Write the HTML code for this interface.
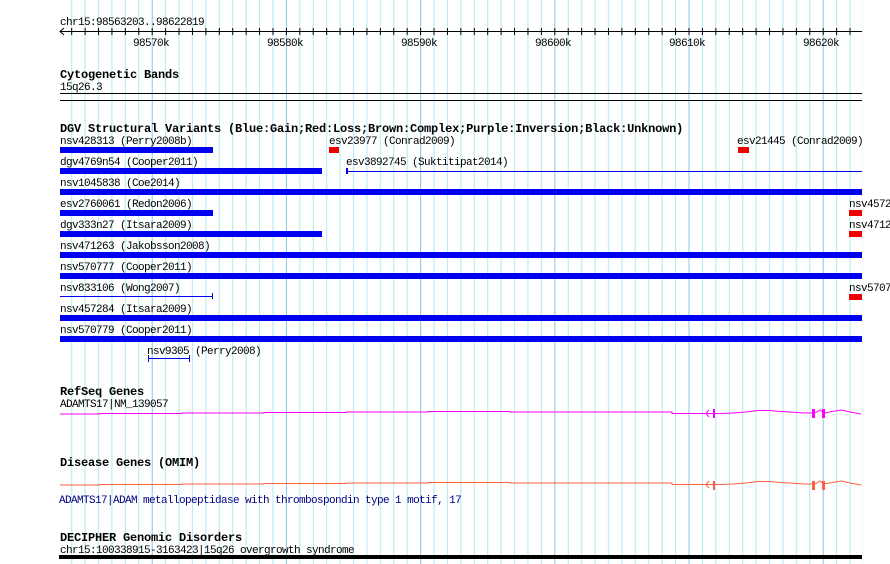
<!DOCTYPE html>
<html><head><meta charset="utf-8"><style>
html,body{margin:0;padding:0;background:#fff;}
svg{display:block;}
text{font-family:"Liberation Mono",monospace;font-size:11px;letter-spacing:-0.6px;fill:#000;}
.b{font-weight:bold;font-size:12px;letter-spacing:-0.2px;}
</style></head><body>
<svg width="890" height="564" xmlns="http://www.w3.org/2000/svg">
<defs>
<pattern id="g" patternUnits="userSpaceOnUse" x="17.5" y="0" width="134.2" height="564">
<rect x="0" y="0" width="1" height="564" fill="#88c4e4"/>
<rect x="13.42" width="1" height="564" fill="#b0e8f0"/>
<rect x="26.84" width="1" height="564" fill="#b0e8f0"/>
<rect x="40.26" width="1" height="564" fill="#b0e8f0"/>
<rect x="53.68" width="1" height="564" fill="#b0e8f0"/>
<rect x="67.1" width="1" height="564" fill="#b0e8f0"/>
<rect x="80.52" width="1" height="564" fill="#b0e8f0"/>
<rect x="93.94" width="1" height="564" fill="#b0e8f0"/>
<rect x="107.36" width="1" height="564" fill="#b0e8f0"/>
<rect x="120.78" width="1" height="564" fill="#b0e8f0"/>
</pattern>
<pattern id="t" patternUnits="userSpaceOnUse" x="17.5" y="0" width="13.42" height="40">
<rect x="0" y="28" width="1" height="7" fill="#000"/>
</pattern>
</defs>
<rect x="66" y="0" width="797" height="564" fill="url(#g)"/>

<text x="60" y="25">chr15:98563203..98622819</text>
<rect x="60" y="31" width="802" height="1" fill="#000"/>
<rect x="66" y="28" width="797" height="7" fill="url(#t)"/>
<path d="M64 28 L60 31.5 L64 35" fill="none" stroke="#000"/>
<text x="151" y="46" text-anchor="middle">98570k</text>
<text x="285" y="46" text-anchor="middle">98580k</text>
<text x="419" y="46" text-anchor="middle">98590k</text>
<text x="553" y="46" text-anchor="middle">98600k</text>
<text x="687" y="46" text-anchor="middle">98610k</text>
<text x="821" y="46" text-anchor="middle">98620k</text>

<text class="b" x="60" y="78">Cytogenetic Bands</text>
<text x="60" y="90">15q26.3</text>
<rect x="60" y="93" width="802" height="1" fill="#000"/>
<rect x="60" y="100" width="802" height="1" fill="#000"/>

<text class="b" x="60" y="132">DGV Structural Variants (Blue:Gain;Red:Loss;Brown:Complex;Purple:Inversion;Black:Unknown)</text>
<g fill="#0000ee">
<text x="60" y="144">nsv428313 (Perry2008b)</text>
<rect x="60" y="147" width="153" height="6" fill="#0000ee"/>
<text x="329" y="144">esv23977 (Conrad2009)</text>
<rect x="329" y="147" width="10" height="6" fill="#ee0000"/>
<text x="737" y="144">esv21445 (Conrad2009)</text>
<rect x="738" y="147" width="11" height="6" fill="#ee0000"/>

<text x="60" y="165">dgv4769n54 (Cooper2011)</text>
<rect x="60" y="168" width="262" height="6" fill="#0000ee"/>
<text x="346" y="165">esv3892745 (Suktitipat2014)</text>
<rect x="346" y="171" width="516" height="1" fill="#0000ee"/>
<rect x="346" y="168" width="2" height="6" fill="#0000ee"/>

<text x="60" y="186">nsv1045838 (Coe2014)</text>
<rect x="60" y="189" width="802" height="6" fill="#0000ee"/>

<text x="60" y="207">esv2760061 (Redon2006)</text>
<rect x="60" y="210" width="153" height="6" fill="#0000ee"/>
<text x="849" y="207">nsv4572</text>
<rect x="849" y="210" width="13" height="6" fill="#ee0000"/>

<text x="60" y="228">dgv333n27 (Itsara2009)</text>
<rect x="60" y="231" width="262" height="6" fill="#0000ee"/>
<text x="849" y="228">nsv4712</text>
<rect x="849" y="231" width="13" height="6" fill="#ee0000"/>

<text x="60" y="249">nsv471263 (Jakobsson2008)</text>
<rect x="60" y="252" width="802" height="6" fill="#0000ee"/>

<text x="60" y="270">nsv570777 (Cooper2011)</text>
<rect x="60" y="273" width="802" height="6" fill="#0000ee"/>

<text x="60" y="291">nsv833106 (Wong2007)</text>
<rect x="60" y="296" width="153" height="1" fill="#0000ee"/>
<rect x="212" y="293" width="1" height="6" fill="#0000ee"/>
<text x="849" y="291">nsv5707</text>
<rect x="849" y="294" width="13" height="6" fill="#ee0000"/>

<text x="60" y="312">nsv457284 (Itsara2009)</text>
<rect x="60" y="315" width="802" height="6" fill="#0000ee"/>

<text x="60" y="333">nsv570779 (Cooper2011)</text>
<rect x="60" y="336" width="802" height="6" fill="#0000ee"/>

<text x="147" y="354">nsv9305 (Perry2008)</text>
<rect x="148" y="358" width="42" height="1" fill="#0000ee"/>
<rect x="148" y="355" width="1" height="7" fill="#0000ee"/>
<rect x="189" y="355" width="1" height="7" fill="#0000ee"/>
</g>

<text class="b" x="60" y="395">RefSeq Genes</text>
<text x="60" y="407">ADAMTS17|NM_139057</text>
<g fill="none" stroke="#ff00ff" stroke-width="1">
<path d="M60 414 H100 V413.5 H182 V413 H264 V412.5 H346 V412 H428 V411.5 H510 V412 H672 V413.5 H713 H722 L733 413 L746 412 L758 410.5 L769 410.5 L781 411.5 L805 413 L815 413 L820 410 L824 413 L835 411 L842 410 L850 412 L861 414"/>
<path d="M709 410 L706 413.5 L709 417"/>
</g>
<rect x="713" y="409" width="2" height="9" fill="#ff00ff"/>
<rect x="812" y="409" width="3" height="9" fill="#ff00ff"/>
<rect x="822" y="409" width="3" height="9" fill="#ff00ff"/>

<text class="b" x="60" y="466">Disease Genes (OMIM)</text>
<g fill="none" stroke="#ff6040" stroke-width="1">
<path d="M60 485 H100 V484.5 H182 V484 H264 V483.5 H346 V483 H428 V482.5 H510 V483 H672 V484.5 H713 H722 L733 484 L746 483 L758 481.5 L769 481.5 L781 482.5 L805 484 L815 484 L820 481 L824 484 L835 482 L842 481 L850 483 L861 485"/>
<path d="M709 481 L706 484.5 L709 488"/>
</g>
<rect x="713" y="481" width="2" height="9" fill="#ff6040"/>
<rect x="812" y="481" width="3" height="9" fill="#ff6040"/>
<rect x="822" y="481" width="3" height="9" fill="#ff6040"/>
<text x="59" y="503" style="fill:#000080">ADAMTS17|ADAM metallopeptidase with thrombospondin type 1 motif, 17</text>

<text class="b" x="60" y="541">DECIPHER Genomic Disorders</text>
<text x="60" y="553">chr15:100338915-3163423|15q26 overgrowth syndrome</text>
<rect x="59" y="555" width="803" height="4" fill="#000"/>
</svg>
</body></html>
